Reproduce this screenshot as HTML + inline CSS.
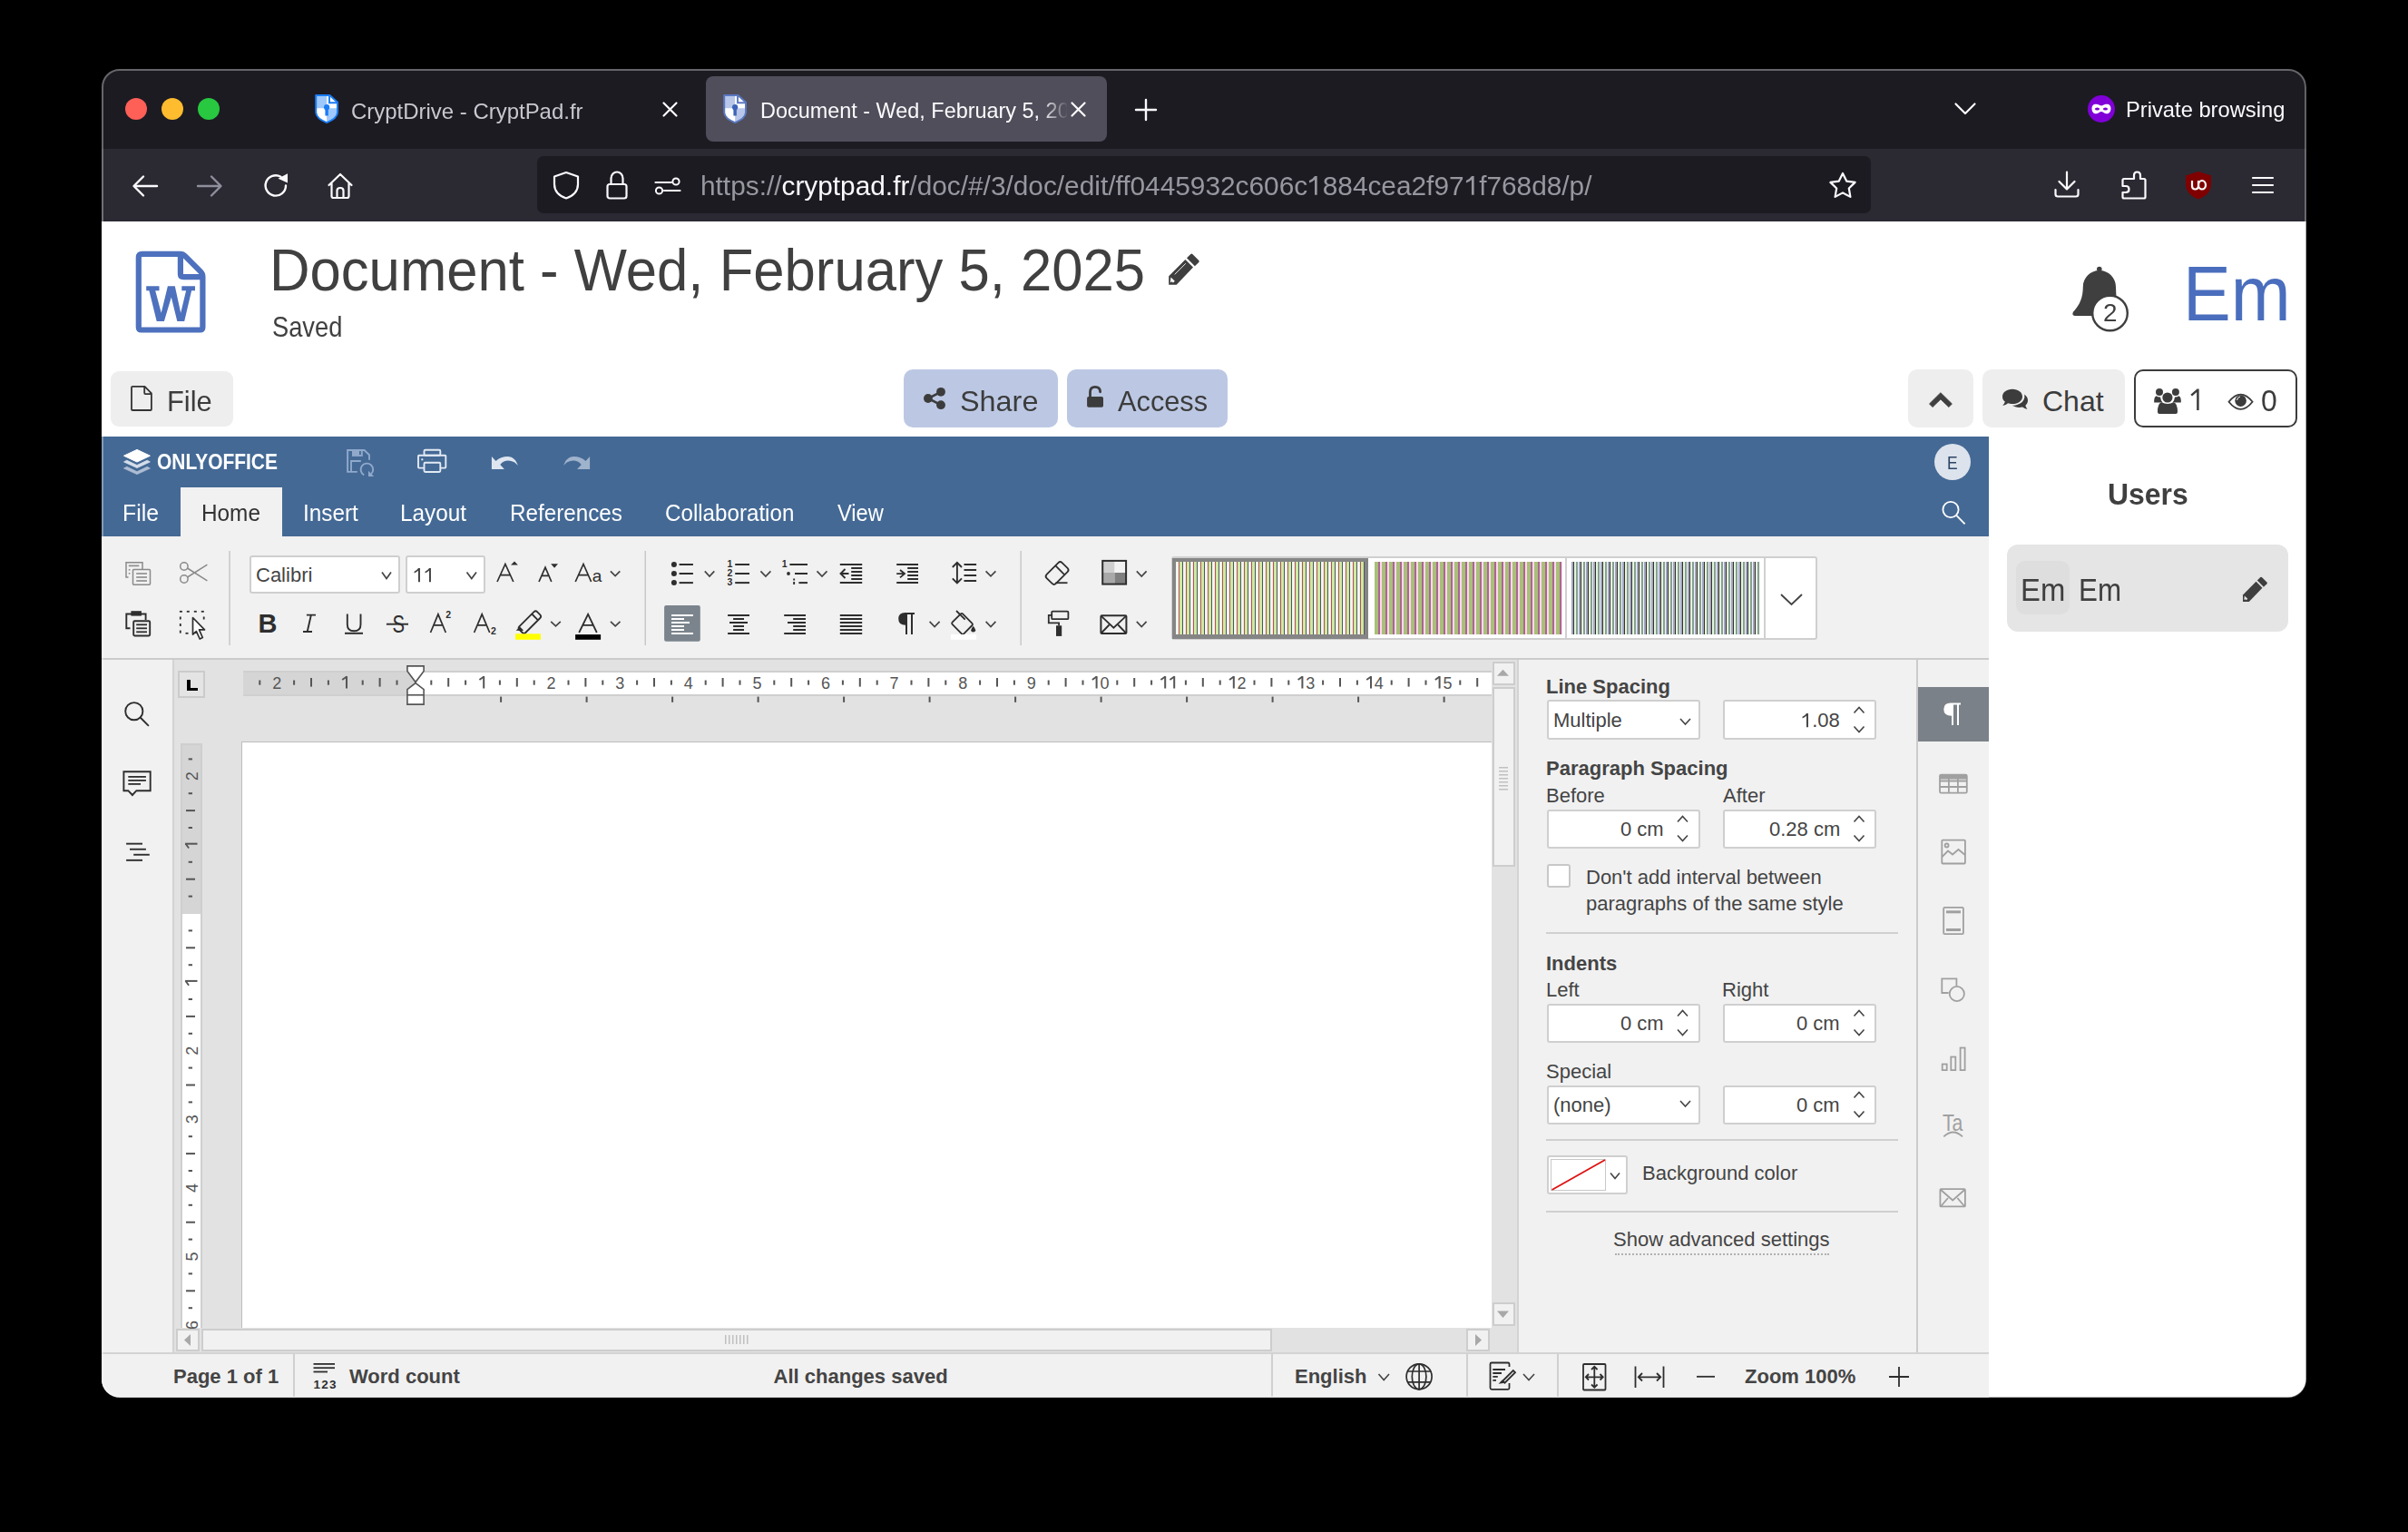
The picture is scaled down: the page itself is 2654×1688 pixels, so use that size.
<!DOCTYPE html>
<html><head><meta charset="utf-8"><style>*{box-sizing:border-box;margin:0;padding:0}
html,body{width:2654px;height:1688px;overflow:hidden;background:#000;font-family:"Liberation Sans",sans-serif}
.a{position:absolute}
#win{position:absolute;left:0;top:0;width:2654px;height:1688px;clip-path:inset(76px 112.5px 148.5px 112px round 20px)}
#wb{position:absolute;left:112px;top:76px;width:2430px;height:1464px;border-radius:20px;border:2px solid rgba(255,255,255,0.33)}
.t{position:absolute;white-space:nowrap;line-height:1}
svg{position:absolute;overflow:visible}
</style></head><body>
<div id="win">
<div class="a" style="left:112px;top:76px;width:2430px;height:88px;background:#1c1b22;"></div>
<div class="a" style="left:138px;top:108px;width:24px;height:24px;background:#fe5f57;border-radius:50%"></div>
<div class="a" style="left:178px;top:108px;width:24px;height:24px;background:#febc2e;border-radius:50%"></div>
<div class="a" style="left:218px;top:108px;width:24px;height:24px;background:#28c840;border-radius:50%"></div>
<div class="a" style="left:112px;top:164px;width:2430px;height:80px;background:#2b2a33;"></div>
<div class="a" style="left:592px;top:172px;width:1470px;height:63px;background:#1c1b22;border-radius:7px"></div>
<div class="a" style="left:112px;top:244px;width:2430px;height:1296px;background:#fff;"></div>
<svg style="left:347px;top:104px" width="26" height="32" viewBox="0 0 26 32"><path d="M1.2 1 H16.4 L25 8.8 V20 Q24.5 26.5 13.1 31.1 Q1.7 26.5 1.2 20 Z" fill="#fff"/><path d="M1.2 1 H13.1 V15.3 H1.2 Z" fill="#9ec8fb"/><path d="M13.1 15.3 H25 V20 Q24.5 26.5 13.1 31.1 Z" fill="#9ec8fb"/><path d="M1.2 1 H16.4 L25 8.8 V20 Q24.5 26.5 13.1 31.1 Q1.7 26.5 1.2 20 Z" fill="none" stroke="#1a7cf5" stroke-width="2" stroke-linejoin="round"/><path d="M16 1.5 V9.2 H24.5" fill="none" stroke="#1a7cf5" stroke-width="1.9"/><circle cx="13.1" cy="14.2" r="3.1" fill="#1a7cf5"/><rect x="11.4" y="14.5" width="3.4" height="9" fill="#1a7cf5"/></svg>
<div class="t" style="left:387.00px;top:110.72px;font-size:24px;color:#c8c8d0;font-weight:400;transform:scaleX(0.9980);transform-origin:0 0;">CryptDrive - CryptPad.fr</div>
<svg style="left:730px;top:112px" width="17" height="17" viewBox="0 0 17 17"><path d="M1.5 1.5 L15.5 15.5 M15.5 1.5 L1.5 15.5" stroke="#fbfbfe" stroke-width="2.2" stroke-linecap="round"/></svg>
<div class="a" style="left:778px;top:84px;width:442px;height:72px;background:#4f4e5a;border-radius:8px"></div>
<svg style="left:797px;top:104px" width="26" height="32" viewBox="0 0 26 32"><path d="M1.2 1 H16.4 L25 8.8 V20 Q24.5 26.5 13.1 31.1 Q1.7 26.5 1.2 20 Z" fill="#fff"/><path d="M1.2 1 H13.1 V15.3 H1.2 Z" fill="#b8c6ea"/><path d="M13.1 15.3 H25 V20 Q24.5 26.5 13.1 31.1 Z" fill="#b8c6ea"/><path d="M1.2 1 H16.4 L25 8.8 V20 Q24.5 26.5 13.1 31.1 Q1.7 26.5 1.2 20 Z" fill="none" stroke="#5b78c2" stroke-width="2" stroke-linejoin="round"/><path d="M16 1.5 V9.2 H24.5" fill="none" stroke="#5b78c2" stroke-width="1.9"/><circle cx="13.1" cy="14.2" r="3.1" fill="#3d62b8"/><rect x="11.4" y="14.5" width="3.4" height="9" fill="#3d62b8"/></svg>
<div class="a" style="left:830px;top:90px;width:346px;height:60px;overflow:hidden;-webkit-mask-image:linear-gradient(to right,#000 318px,rgba(0,0,0,0.05) 346px)"><div class="t" style="left:8px;top:19.5px;font-size:24px;color:#fbfbfe;transform:scaleX(0.976);transform-origin:0 0">Document - Wed, February 5, 2025</div></div>
<svg style="left:1180px;top:112px" width="17" height="17" viewBox="0 0 17 17"><path d="M1.5 1.5 L15.5 15.5 M15.5 1.5 L1.5 15.5" stroke="#fbfbfe" stroke-width="2.2" stroke-linecap="round"/></svg>
<svg style="left:1251px;top:109px" width="24" height="24" viewBox="0 0 24 24"><path d="M12 1 V23 M1 12 H23" stroke="#fbfbfe" stroke-width="2.4" stroke-linecap="round"/></svg>
<svg style="left:2154px;top:113px" width="24" height="14" viewBox="0 0 24 14"><path d="M1.5 1.5 L12 12 L22.5 1.5" stroke="#fbfbfe" stroke-width="2.2" fill="none" stroke-linecap="round" stroke-linejoin="round"/></svg>
<svg style="left:2301px;top:105px" width="30" height="30" viewBox="0 0 30 30"><circle cx="15" cy="15" r="15" fill="#8000d7"/><path d="M4.5 14.5 C4.5 10 8 9 11 10 C13 10.6 14 11.5 15 11.5 C16 11.5 17 10.6 19 10 C22 9 25.5 10 25.5 14.5 C25.5 19 22.5 21 19.5 20 C17.5 19.4 16.5 18 15 18 C13.5 18 12.5 19.4 10.5 20 C7.5 21 4.5 19 4.5 14.5 Z" fill="#fff"/><ellipse cx="10.5" cy="15" rx="2.6" ry="1.6" fill="#8000d7"/><ellipse cx="19.5" cy="15" rx="2.6" ry="1.6" fill="#8000d7"/></svg>
<div class="t" style="left:2343.02px;top:108.72px;font-size:24px;color:#fbfbfe;font-weight:400;transform:scaleX(0.9885);transform-origin:0 0;">Private browsing</div>
<svg style="left:146px;top:193px" width="28" height="24" viewBox="0 0 28 24"><path d="M27 12 H2 M12 1.5 L1.5 12 L12 22.5" stroke="#fbfbfe" stroke-width="2.4" fill="none" stroke-linecap="round" stroke-linejoin="round"/></svg>
<svg style="left:217px;top:193px" width="28" height="24" viewBox="0 0 28 24"><path d="M1 12 H26 M16 1.5 L26.5 12 L16 22.5" stroke="#8f8f9d" stroke-width="2.4" fill="none" stroke-linecap="round" stroke-linejoin="round"/></svg>
<svg style="left:290px;top:190px" width="28" height="28" viewBox="0 0 28 28"><path d="M25 14.5 A 11.2 11.2 0 1 1 19.5 4.8" stroke="#fbfbfe" stroke-width="2.4" fill="none" stroke-linecap="round"/><path d="M16.5 6.8 L27 1.2 L27 11.5 Z" fill="#fbfbfe"/></svg>
<svg style="left:360px;top:190px" width="30" height="30" viewBox="0 0 30 30"><path d="M2.5 14 L15 2 L27.5 14 M5.5 11.5 V26 C5.5 27 6 28 7.5 28 H22.5 C24 28 24.5 27 24.5 26 V11.5 M11.5 28 V20 C11.5 18 13 17 15 17 C17 17 18.5 18 18.5 20 V28" stroke="#fbfbfe" stroke-width="2.2" fill="none" stroke-linecap="round" stroke-linejoin="round"/></svg>
<svg style="left:609px;top:188px" width="30" height="32" viewBox="0 0 30 32"><path d="M15 2 L28 6.5 V15 C28 23 22 28 15 30.5 C8 28 2 23 2 15 V6.5 Z" stroke="#fbfbfe" stroke-width="2.2" fill="none" stroke-linejoin="round"/></svg>
<svg style="left:668px;top:188px" width="24" height="32" viewBox="0 0 24 32"><rect x="1.5" y="15" width="21" height="15.5" rx="2.5" stroke="#fbfbfe" stroke-width="2.2" fill="none"/><path d="M5.5 15 V8.5 C5.5 4.5 8.5 1.5 12 1.5 C15.5 1.5 18.5 4.5 18.5 8.5 V15" stroke="#fbfbfe" stroke-width="2.2" fill="none"/></svg>
<svg style="left:721px;top:195px" width="30" height="20" viewBox="0 0 30 20"><path d="M1.5 6 H19 M11 15 H28.5" stroke="#fbfbfe" stroke-width="2.2" stroke-linecap="round"/><circle cx="24" cy="5" r="3.6" stroke="#fbfbfe" stroke-width="2" fill="#1c1b22"/><circle cx="5.5" cy="15" r="3.6" stroke="#fbfbfe" stroke-width="2" fill="#1c1b22"/></svg>
<div class="t" style="left:772.01px;top:189.65px;font-size:30px;color:#9797a0;font-weight:400;transform:scaleX(0.9939);transform-origin:0 0;">https://<span style="color:#fbfbfe">cryptpad.fr</span>/doc/#/3/doc/edit/ff0445932c606c<svg viewBox="0 0 556 690" style="position:static;display:inline-block;width:0.556em;height:0.69em;overflow:visible"><path d="M275 0 H362 V690 H272 V130 Q190 210 70 250 V165 Q205 110 275 0 Z" fill="currentColor"/></svg>884cea2f97<svg viewBox="0 0 556 690" style="position:static;display:inline-block;width:0.556em;height:0.69em;overflow:visible"><path d="M275 0 H362 V690 H272 V130 Q190 210 70 250 V165 Q205 110 275 0 Z" fill="currentColor"/></svg>f768d8/p/</div>
<svg style="left:2015px;top:189px" width="32" height="31" viewBox="0 0 32 31"><path d="M16 2 L20.2 10.6 L29.6 11.9 L22.8 18.5 L24.4 27.9 L16 23.4 L7.6 27.9 L9.2 18.5 L2.4 11.9 L11.8 10.6 Z" stroke="#fbfbfe" stroke-width="2.2" fill="none" stroke-linejoin="round"/></svg>
<svg style="left:2264px;top:188px" width="28" height="30" viewBox="0 0 28 30"><path d="M14 1.5 V20 M5.5 12 L14 20.5 L22.5 12 M1.5 21 V26 C1.5 27.5 2.5 28.5 4 28.5 H24 C25.5 28.5 26.5 27.5 26.5 26 V21" stroke="#fbfbfe" stroke-width="2.2" fill="none" stroke-linecap="round" stroke-linejoin="round"/></svg>
<svg style="left:2338px;top:188px" width="28" height="32" viewBox="0 0 28 32"><path d="M9 9 H14 V5.5 C14 3 15.5 1.5 17.5 1.5 C19.5 1.5 21 3 21 5.5 V9 H25 C25.8 9 26.5 9.7 26.5 10.5 V29 C26.5 29.8 25.8 30.5 25 30.5 H3 C2.2 30.5 1.5 29.8 1.5 29 V24 H5 C7 24 8.5 22.5 8.5 20.5 C8.5 18.5 7 17 5 17 H1.5 V10.5 C1.5 9.7 2.2 9 3 9 Z" stroke="#fbfbfe" stroke-width="2.2" fill="none" stroke-linejoin="round"/></svg>
<svg style="left:2408px;top:188px" width="30" height="32" viewBox="0 0 30 32"><path d="M15 1 L29 5.5 V15 C29 23 23 28.5 15 31.5 C7 28.5 1 23 1 15 V5.5 Z" fill="#800000"/><path d="M8 11 V16.5 C8 19 9.5 20.5 11.5 20.5 C13.5 20.5 15 19 15 16.5 V11" stroke="#fff" stroke-width="2.2" fill="none"/><path d="M15 16 C15 13 17 11 19 11 C21 11 23 13 23 16 C23 18.8 21 20.5 19 20.5 C17 20.5 15 18.8 15 16 Z" stroke="#fff" stroke-width="2.2" fill="none"/></svg>
<svg style="left:2482px;top:194px" width="24" height="20" viewBox="0 0 24 20"><path d="M1 2 H23 M1 10 H23 M1 18 H23" stroke="#fbfbfe" stroke-width="2.2" stroke-linecap="round"/></svg>
<div class="t" style="left:296.78px;top:265.92px;font-size:64px;color:#404040;font-weight:400;transform:scaleX(0.9632);transform-origin:0 0;">Document - Wed, February 5, 2025</div>
<div class="t" style="left:300.15px;top:343.96px;font-size:32px;color:#404040;font-weight:400;transform:scaleX(0.8523);transform-origin:0 0;">Saved</div>
<div class="a" style="left:122px;top:409px;width:135px;height:61px;background:#eeeeee;border-radius:9px"></div>
<div class="t" style="left:184.37px;top:425.96px;font-size:32px;color:#3c3c3c;font-weight:400;transform:scaleX(0.9653);transform-origin:0 0;">File</div>
<div class="a" style="left:996px;top:407px;width:170px;height:64px;background:#bcc8e3;border-radius:10px"></div>
<div class="t" style="left:1057.99px;top:425.96px;font-size:32px;color:#3c3c3c;font-weight:400;transform:scaleX(1.0120);transform-origin:0 0;">Share</div>
<div class="a" style="left:1176px;top:407px;width:177px;height:64px;background:#bcc8e3;border-radius:10px"></div>
<div class="t" style="left:1232.00px;top:425.96px;font-size:32px;color:#3c3c3c;font-weight:400;transform:scaleX(0.9608);transform-origin:0 0;">Access</div>
<div class="t" style="left:2406.49px;top:281.18px;font-size:85px;color:#4a6ebd;font-weight:400;transform:scaleX(0.9304);transform-origin:0 0;">Em</div>
<div class="a" style="left:2103px;top:407px;width:72px;height:64px;background:#eeeeee;border-radius:10px"></div>
<div class="a" style="left:2185px;top:407px;width:157px;height:64px;background:#eeeeee;border-radius:10px"></div>
<div class="t" style="left:2251.00px;top:425.96px;font-size:32px;color:#3c3c3c;font-weight:400;transform:scaleX(1.0000);transform-origin:0 0;">Chat</div>
<div class="a" style="left:2352px;top:407px;width:180px;height:64px;border:2px solid #3c3c3c;border-radius:10px"></div>
<svg style="left:0;top:0" width="2654" height="1688" viewBox="0 0 2654 1688"><path d="M2422.4 428.6 V452 M2415.2 435.6 L2422.4 429.4" stroke="#3c3c3c" stroke-width="2.5" fill="none"/></svg>
<div class="t" style="left:2492.03px;top:425.12px;font-size:33px;color:#3c3c3c;font-weight:400;transform:scaleX(0.9688);transform-origin:0 0;">0</div>
<svg style="left:0;top:0" width="2654" height="1688" viewBox="0 0 2654 1688"><g transform="translate(149.7,276.8)" fill="none" stroke="#4e71be" stroke-width="6.2" stroke-linejoin="round"><path d="M3.1 7 Q3.1 3.1 7 3.1 H49 Q52 3.1 54.5 5.6 L71.5 22.6 Q73.7 24.8 73.7 28 V83.8 Q73.7 86.7 70.8 86.7 H6 Q3.1 86.7 3.1 83.8 Z"/><path d="M49.2 3.1 V25 Q49.2 28.4 52.6 28.4 H73.7"/></g><path fill="#4e71be" d="M161.2 315.3 H175.5 V320.3 H171.2 L177.7 344.7 L184.9 315.3 H192.8 L199.2 344.7 L205.1 320.3 H200.3 V315.3 H215 V320.3 H211.1 L203.2 354 H195.3 L188.8 327.5 L180.9 354 H172.7 L164.4 320.3 H161.2 Z"/><g fill="#3f3f3f"><path d="M1288.2 313.7 V304.3 L1306.4 286 L1315 294.6 L1296.7 313.7 Z"/><path d="M1308 284.3 L1312.3 280 Q1313.3 279.2 1314.3 280 L1321.3 287 Q1322.1 288 1321.3 289 L1316.9 293.3 Z"/></g><path d="M1294.7 302.4 L1306.8 290.3" stroke="#fff" stroke-width="0.9"/><path d="M1290.5 305.5 L1294.8 309.8 L1292.9 311.5 L1291.4 310.2 L1289.8 311.4 Z" fill="#fff"/><path d="M145 427 Q145 425.9 146.1 425.9 H159.5 L166.9 433.3 V451 Q166.9 452 165.9 452 H146.1 Q145 452 145 451 Z M159.2 425.9 V433 Q159.2 434.1 160.3 434.1 H166.9" fill="none" stroke="#333" stroke-width="1.8" stroke-linejoin="round"/><g fill="#3c3c3c"><circle cx="1037" cy="431.8" r="4.9"/><circle cx="1022.9" cy="439" r="4.9"/><circle cx="1037" cy="446.2" r="4.9"/></g><path d="M1037 431.8 L1022.9 439 L1037 446.2" stroke="#3c3c3c" stroke-width="2.6" fill="none"/><rect x="1198.1" y="437" width="17.9" height="11.8" rx="1.8" fill="#3c3c3c"/><path d="M1201.5 437.5 V432 Q1201.5 426.3 1207 426.3 Q1212.6 426.3 1212.6 431.8" stroke="#3c3c3c" stroke-width="2.8" fill="none" stroke-linecap="round"/><circle cx="2313.8" cy="296.6" r="2.8" fill="#3f3f3f"/><path d="M2295.8 316 C2295.8 306 2303.9 298 2313.9 298 C2323.9 298 2332 306 2332 316 L2333.3 348 H2287 C2284 348 2283.5 345 2286 342.5 C2292 336 2295.8 328 2295.8 316 Z" fill="#3f3f3f"/><circle cx="2325.5" cy="345" r="19.3" fill="#fff" stroke="#3f3f3f" stroke-width="2.4"/><path d="M2126.5 444.9 L2138.9 432.7 L2151.4 444.9 L2147.9 448.6 L2138.9 439.9 L2130 448.6 Z" fill="#3f3f3f" stroke="#3f3f3f" stroke-width="0.8" stroke-linejoin="round"/><path d="M2218 428.8 C2224.5 428.8 2229 432.5 2229 436.9 C2229 441.4 2224.5 445 2218 445 C2216 445 2214.5 444.7 2213 444.3 C2211.5 445.5 2209.5 446.7 2207.2 446.9 C2208.5 445.6 2209.5 444 2209.8 442.6 C2208 441.2 2207 439.2 2207 436.9 C2207 432.5 2211.5 428.8 2218 428.8 Z" fill="#3c3c3c"/><path d="M2231.2 434.6 C2233.6 436.3 2235 438.8 2235 441.3 C2235 443.5 2234 445.3 2232.4 446.8 C2232.6 448.2 2233.5 449.7 2234.5 450.7 C2232.6 450.5 2230.6 449.6 2229.2 448.4 C2228 448.7 2226.8 448.9 2225.5 448.9 C2222.6 448.9 2219.8 448 2217.8 446.8 C2225.5 446.6 2231.4 442.3 2231.4 436.9 Z" fill="#3c3c3c"/><g fill="#3c3c3c"><circle cx="2380" cy="432" r="4"/><circle cx="2397.9" cy="432" r="4"/><path d="M2374.2 443.6 Q2373.8 437.5 2376.5 436.2 Q2378.5 437.6 2381 437.5 Q2381.5 441.5 2383.5 443.6 Z"/><path d="M2403.8 443.6 Q2404.2 437.5 2401.5 436.2 Q2399.5 437.6 2397 437.5 Q2396.5 441.5 2394.5 443.6 Z"/><circle cx="2388.9" cy="438" r="5.6"/><path d="M2378 454 Q2378 444 2382.5 443.3 Q2385.5 445 2389 445 Q2392.5 445 2395.5 443.3 Q2400 444 2400 454 Q2400 456 2398 456 H2380 Q2378 456 2378 454 Z"/></g><path d="M2380 432 m0 0" /><path d="M2456.5 442.8 Q2469.6 426.5 2482.6 442.8 Q2469.6 459 2456.5 442.8 Z" fill="none" stroke="#3c3c3c" stroke-width="1.8"/><circle cx="2469.6" cy="441.6" r="6.3" fill="#3c3c3c"/><path d="M2465.5 441 Q2466 437.5 2469 437" stroke="#fff" stroke-width="1" fill="none"/></svg>
<div class="t" style="left:2317.97px;top:332.19px;font-size:27px;color:#3f3f3f;font-weight:400;transform:scaleX(1.0308);transform-origin:0 0;">2</div>
<div class="a" style="left:112px;top:481px;width:2080px;height:110px;background:#446995;"></div>
<div class="a" style="left:199px;top:537px;width:112px;height:54px;background:#f1f1f1;"></div>
<div class="a" style="left:112px;top:591px;width:2080px;height:136px;background:#f1f1f1;border-bottom:2px solid #cbcbcb"></div>
<div class="a" style="left:112px;top:727px;width:80px;height:763px;background:#f1f1f1;border-right:2px solid #d3d3d3"></div>
<div class="a" style="left:192px;top:727px;width:1480px;height:763px;background:#e2e2e2;"></div>
<div class="a" style="left:266px;top:817px;width:1378px;height:646px;background:#fff;border-left:1px solid #bdbdbd;border-top:1px solid #bdbdbd"></div>
<div class="a" style="left:1672px;top:727px;width:520px;height:763px;background:#f1f1f1;border-left:2px solid #d3d3d3"></div>
<div class="a" style="left:2112px;top:727px;width:80px;height:763px;background:#f1f1f1;border-left:2px solid #cbcbcb"></div>
<div class="a" style="left:112px;top:1490px;width:2080px;height:50px;background:#f1f1f1;border-top:2px solid #d3d3d3"></div>
<div class="t" style="left:173.19px;top:498.06px;font-size:23px;color:#fff;font-weight:700;transform:scaleX(0.9097);transform-origin:0 0;">ONLYOFFICE</div>
<div class="t" style="left:134.62px;top:552.88px;font-size:25px;color:#fff;font-weight:400;transform:scaleX(0.9921);transform-origin:0 0;">File</div>
<div class="t" style="left:221.65px;top:552.88px;font-size:25px;color:#333;font-weight:400;transform:scaleX(0.9734);transform-origin:0 0;">Home</div>
<div class="t" style="left:333.56px;top:552.88px;font-size:25px;color:#fff;font-weight:400;transform:scaleX(0.9721);transform-origin:0 0;">Insert</div>
<div class="t" style="left:441.45px;top:552.88px;font-size:25px;color:#fff;font-weight:400;transform:scaleX(0.9740);transform-origin:0 0;">Layout</div>
<div class="t" style="left:561.56px;top:552.88px;font-size:25px;color:#fff;font-weight:400;transform:scaleX(0.9688);transform-origin:0 0;">References</div>
<div class="t" style="left:732.63px;top:552.88px;font-size:25px;color:#fff;font-weight:400;transform:scaleX(0.9662);transform-origin:0 0;">Collaboration</div>
<div class="t" style="left:923.00px;top:552.88px;font-size:25px;color:#fff;font-weight:400;transform:scaleX(0.9463);transform-origin:0 0;">View</div>
<div class="a" style="left:2132px;top:489px;width:40px;height:40px;background:#dde3ec;border-radius:50%"></div>
<div class="t" style="left:2146.07px;top:498.75px;font-size:21px;color:#2b4566;font-weight:400;transform:scaleX(0.8308);transform-origin:0 0;">E</div>
<div class="a" style="left:275px;top:612px;width:166px;height:42px;background:#fff;border:2px solid #cfcfcf;border-radius:3px"></div>
<div class="a" style="left:447px;top:612px;width:88px;height:42px;background:#fff;border:2px solid #cfcfcf;border-radius:3px"></div>
<div class="t" style="left:282.00px;top:623.41px;font-size:22px;color:#444;font-weight:400;">Calibri</div>
<div class="t" style="left:455.00px;top:623.41px;font-size:22px;color:#444;font-weight:400;"><svg viewBox="0 0 556 690" style="position:static;display:inline-block;width:0.556em;height:0.69em;overflow:visible"><path d="M275 0 H362 V690 H272 V130 Q190 210 70 250 V165 Q205 110 275 0 Z" fill="currentColor"/></svg><svg viewBox="0 0 556 690" style="position:static;display:inline-block;width:0.556em;height:0.69em;overflow:visible"><path d="M275 0 H362 V690 H272 V130 Q190 210 70 250 V165 Q205 110 275 0 Z" fill="currentColor"/></svg></div>
<div class="a" style="left:1291px;top:613px;width:712px;height:92px;background:#fff;border:2px solid #cfcfcf;border-radius:3px"></div>
<div class="a" style="left:1292px;top:614.5px;width:216px;height:89px;background:#858585;"></div>
<div class="a" style="left:1296px;top:619px;width:208px;height:80px;background:repeating-linear-gradient(90deg,#eef7ee 0px,#eef7ee 1.66px,#ffe4ee 1.66px,#ffe4ee 3.3px,#a85a50 3.3px,#a85a50 4.15px,#cfe8a2 4.15px,#cfe8a2 7px,#4c5a5a 7px,#4c5a5a 8px)"></div>
<div class="a" style="left:1515px;top:619px;width:207px;height:80px;background:repeating-linear-gradient(90deg,#a8c078 0px,#a8c078 3.6px,#a86890 3.6px,#a86890 6.1px,#ffd6ef 6.1px,#ffd6ef 8px)"></div>
<div class="a" style="left:1725px;top:614px;width:2px;height:90px;background:#d0d0d0;"></div>
<div class="a" style="left:1732px;top:619px;width:208px;height:80px;background:repeating-linear-gradient(90deg,#a0a6c4 0px,#a0a6c4 2px,#3c3020 2px,#3c3020 3.4px,#e2f6e0 3.4px,#e2f6e0 5px,#88a090 5px,#88a090 7px,#f4f6f8 7px,#f4f6f8 8px)"></div>
<div class="a" style="left:1944px;top:614px;width:2px;height:90px;background:#d0d0d0;"></div>
<div class="a" style="left:196px;top:739px;width:30px;height:30px;background:#e4e4e4;border:2px solid #cbcbcb"></div>
<div class="a" style="left:206px;top:749px;width:3.5px;height:12px;background:#000;"></div>
<div class="a" style="left:206px;top:757.5px;width:12px;height:3.5px;background:#000;"></div>
<div class="a" style="left:268px;top:739px;width:1376px;height:28px;background:#cfcfcf;"></div>
<div class="a" style="left:268px;top:741px;width:1376px;height:24px;background:#fff;"></div>
<div class="a" style="left:268px;top:741px;width:189px;height:24px;background:#d5d5d5;"></div>
<div class="a" style="left:199px;top:819px;width:24px;height:644px;background:#cfcfcf;"></div>
<div class="a" style="left:201px;top:821px;width:20px;height:642px;background:#fff;"></div>
<div class="a" style="left:201px;top:821px;width:20px;height:186px;background:#d5d5d5;"></div>
<div class="a" style="left:1644px;top:727px;width:28px;height:736px;background:#e2e2e2;"></div>
<div class="a" style="left:1644.5px;top:729px;width:25.5px;height:26px;background:#f1f1f1;border:2px solid #cdcdcd"></div>
<div class="a" style="left:1644.5px;top:757px;width:25.5px;height:198px;background:#f1f1f1;border:2px solid #cdcdcd"></div>
<div class="a" style="left:1644.5px;top:1435px;width:25.5px;height:26px;background:#f1f1f1;border:2px solid #cdcdcd"></div>
<div class="a" style="left:192px;top:1463px;width:1452px;height:27px;background:#e2e2e2;"></div>
<div class="a" style="left:194px;top:1463.5px;width:26px;height:25px;background:#f1f1f1;border:2px solid #cdcdcd"></div>
<div class="a" style="left:222px;top:1463.5px;width:1180px;height:25px;background:#f1f1f1;border:2px solid #cdcdcd"></div>
<div class="a" style="left:1616px;top:1463.5px;width:25.5px;height:25px;background:#f1f1f1;border:2px solid #cdcdcd"></div>
<div class="t" style="left:2322.77px;top:528.12px;font-size:33px;color:#3f3f3f;font-weight:700;transform:scaleX(0.9674);transform-origin:0 0;">Users</div>
<div class="a" style="left:2212px;top:600px;width:310px;height:96px;background:#e5e5e5;border-radius:12px"></div>
<div class="a" style="left:2222px;top:618px;width:59px;height:59px;background:#dedede;border-radius:10px"></div>
<div class="t" style="left:2227.19px;top:632.42px;font-size:35px;color:#3f3f3f;font-weight:400;transform:scaleX(0.9375);transform-origin:0 0;">Em</div>
<div class="t" style="left:2291.31px;top:632.42px;font-size:35px;color:#3f3f3f;font-weight:400;transform:scaleX(0.8958);transform-origin:0 0;">Em</div>
<div class="t" style="left:1704.00px;top:746.41px;font-size:22px;color:#444;font-weight:700;">Line Spacing</div>
<div class="a" style="left:1704.5px;top:771.0px;width:169px;height:43.5px;background:#fff;border:2px solid #cfcfcf;border-radius:3px"></div>
<div class="a" style="left:1898.5px;top:771.0px;width:169px;height:43.5px;background:#fff;border:2px solid #cfcfcf;border-radius:3px"></div>
<div class="t" style="left:1712.00px;top:783.41px;font-size:22px;color:#444;font-weight:400;">Multiple</div>
<div class="t" style="left:1985.00px;top:783.41px;font-size:22px;color:#444;font-weight:400;"><svg viewBox="0 0 556 690" style="position:static;display:inline-block;width:0.556em;height:0.69em;overflow:visible"><path d="M275 0 H362 V690 H272 V130 Q190 210 70 250 V165 Q205 110 275 0 Z" fill="currentColor"/></svg>.08</div>
<div class="t" style="left:1704.00px;top:836.41px;font-size:22px;color:#444;font-weight:700;">Paragraph Spacing</div>
<div class="t" style="left:1704.00px;top:866.41px;font-size:22px;color:#444;font-weight:400;">Before</div>
<div class="t" style="left:1899.00px;top:866.41px;font-size:22px;color:#444;font-weight:400;">After</div>
<div class="a" style="left:1704.5px;top:891.5px;width:169px;height:43.5px;background:#fff;border:2px solid #cfcfcf;border-radius:3px"></div>
<div class="a" style="left:1898.5px;top:891.5px;width:169px;height:43.5px;background:#fff;border:2px solid #cfcfcf;border-radius:3px"></div>
<div class="t" style="left:1786.00px;top:903.41px;font-size:22px;color:#444;font-weight:400;">0 cm</div>
<div class="t" style="left:1950.00px;top:903.41px;font-size:22px;color:#444;font-weight:400;">0.28 cm</div>
<div class="a" style="left:1705px;top:952px;width:26px;height:26px;background:#fff;border:2px solid #c8c8c8;border-radius:3px"></div>
<div class="t" style="left:1748.00px;top:956.41px;font-size:22px;color:#444;font-weight:400;">Don't add interval between</div>
<div class="t" style="left:1748.00px;top:985.41px;font-size:22px;color:#444;font-weight:400;">paragraphs of the same style</div>
<div class="a" style="left:1704px;top:1027px;width:388px;height:2px;background:#d0d0d0;"></div>
<div class="t" style="left:1704.00px;top:1050.91px;font-size:22px;color:#444;font-weight:700;">Indents</div>
<div class="t" style="left:1704.00px;top:1080.41px;font-size:22px;color:#444;font-weight:400;">Left</div>
<div class="t" style="left:1898.00px;top:1080.41px;font-size:22px;color:#444;font-weight:400;">Right</div>
<div class="a" style="left:1704.5px;top:1105.5px;width:169px;height:43.5px;background:#fff;border:2px solid #cfcfcf;border-radius:3px"></div>
<div class="a" style="left:1898.5px;top:1105.5px;width:169px;height:43.5px;background:#fff;border:2px solid #cfcfcf;border-radius:3px"></div>
<div class="t" style="left:1786.00px;top:1117.41px;font-size:22px;color:#444;font-weight:400;">0 cm</div>
<div class="t" style="left:1980.00px;top:1117.41px;font-size:22px;color:#444;font-weight:400;">0 cm</div>
<div class="t" style="left:1704.00px;top:1170.41px;font-size:22px;color:#444;font-weight:400;">Special</div>
<div class="a" style="left:1704.5px;top:1195.5px;width:169px;height:43.5px;background:#fff;border:2px solid #cfcfcf;border-radius:3px"></div>
<div class="a" style="left:1898.5px;top:1195.5px;width:169px;height:43.5px;background:#fff;border:2px solid #cfcfcf;border-radius:3px"></div>
<div class="t" style="left:1712.00px;top:1207.41px;font-size:22px;color:#444;font-weight:400;">(none)</div>
<div class="t" style="left:1980.00px;top:1207.41px;font-size:22px;color:#444;font-weight:400;">0 cm</div>
<div class="a" style="left:1704px;top:1255px;width:388px;height:2px;background:#d0d0d0;"></div>
<div class="a" style="left:1704.5px;top:1272.5px;width:89px;height:43.5px;background:#fff;border:2px solid #cfcfcf;border-radius:3px"></div>
<div class="a" style="left:1709px;top:1277px;width:61px;height:35px;background:#fff;border:1.5px solid #c8c8c8"></div>
<div class="t" style="left:1810.00px;top:1282.41px;font-size:22px;color:#444;font-weight:400;">Background color</div>
<div class="a" style="left:1704px;top:1333.5px;width:388px;height:2px;background:#d0d0d0;"></div>
<div class="t" style="left:1778.00px;top:1355.41px;font-size:22px;color:#444;font-weight:400;">Show advanced settings</div>
<div class="a" style="left:1780px;top:1381px;width:236px;height:0;border-top:2px dotted #b0b0b0"></div>
<div class="a" style="left:2114px;top:757px;width:78px;height:60px;background:#7b8188;"></div>
<div class="t" style="left:191.00px;top:1506.41px;font-size:22px;color:#444;font-weight:700;">Page 1 of 1</div>
<div class="a" style="left:323px;top:1492px;width:2px;height:48px;background:#d0d0d0;"></div>
<div class="t" style="left:385.00px;top:1506.41px;font-size:22px;color:#444;font-weight:700;">Word count</div>
<div class="t" style="left:852.60px;top:1506.41px;font-size:22px;color:#444;font-weight:700;">All changes saved</div>
<div class="a" style="left:1401px;top:1492px;width:2px;height:48px;background:#d0d0d0;"></div>
<div class="t" style="left:1427.00px;top:1506.41px;font-size:22px;color:#444;font-weight:700;">English</div>
<div class="a" style="left:1616px;top:1492px;width:2px;height:48px;background:#d0d0d0;"></div>
<div class="a" style="left:1716px;top:1492px;width:2px;height:48px;background:#d0d0d0;"></div>
<div class="t" style="left:1923.00px;top:1506.41px;font-size:22px;color:#444;font-weight:700;">Zoom 100%</div>
<svg style="left:0;top:0" width="2654" height="1688" viewBox="0 0 2654 1688"><g fill="#555"><rect x="285.3" y="749.5" width="2" height="5.2"/><rect x="323.1" y="749.5" width="2" height="5.2"/><rect x="342.0" y="747" width="2" height="9.6"/><rect x="360.9" y="749.5" width="2" height="5.2"/><rect x="398.7" y="749.5" width="2" height="5.2"/><rect x="417.6" y="747" width="2" height="9.6"/><rect x="436.5" y="749.5" width="2" height="5.2"/><rect x="474.3" y="749.5" width="2" height="5.2"/><rect x="493.2" y="747" width="2" height="9.6"/><rect x="512.1" y="749.5" width="2" height="5.2"/><rect x="549.9" y="749.5" width="2" height="5.2"/><rect x="568.8" y="747" width="2" height="9.6"/><rect x="587.7" y="749.5" width="2" height="5.2"/><rect x="625.5" y="749.5" width="2" height="5.2"/><rect x="644.4" y="747" width="2" height="9.6"/><rect x="663.3" y="749.5" width="2" height="5.2"/><rect x="701.1" y="749.5" width="2" height="5.2"/><rect x="720.0" y="747" width="2" height="9.6"/><rect x="738.9" y="749.5" width="2" height="5.2"/><rect x="776.7" y="749.5" width="2" height="5.2"/><rect x="795.6" y="747" width="2" height="9.6"/><rect x="814.5" y="749.5" width="2" height="5.2"/><rect x="852.3" y="749.5" width="2" height="5.2"/><rect x="871.2" y="747" width="2" height="9.6"/><rect x="890.1" y="749.5" width="2" height="5.2"/><rect x="927.9" y="749.5" width="2" height="5.2"/><rect x="946.8" y="747" width="2" height="9.6"/><rect x="965.7" y="749.5" width="2" height="5.2"/><rect x="1003.5" y="749.5" width="2" height="5.2"/><rect x="1022.4" y="747" width="2" height="9.6"/><rect x="1041.3" y="749.5" width="2" height="5.2"/><rect x="1079.1" y="749.5" width="2" height="5.2"/><rect x="1098.0" y="747" width="2" height="9.6"/><rect x="1116.9" y="749.5" width="2" height="5.2"/><rect x="1154.7" y="749.5" width="2" height="5.2"/><rect x="1173.6" y="747" width="2" height="9.6"/><rect x="1192.5" y="749.5" width="2" height="5.2"/><rect x="1230.3" y="749.5" width="2" height="5.2"/><rect x="1249.2" y="747" width="2" height="9.6"/><rect x="1268.1" y="749.5" width="2" height="5.2"/><rect x="1305.9" y="749.5" width="2" height="5.2"/><rect x="1324.8" y="747" width="2" height="9.6"/><rect x="1343.7" y="749.5" width="2" height="5.2"/><rect x="1381.5" y="749.5" width="2" height="5.2"/><rect x="1400.4" y="747" width="2" height="9.6"/><rect x="1419.3" y="749.5" width="2" height="5.2"/><rect x="1457.1" y="749.5" width="2" height="5.2"/><rect x="1476.0" y="747" width="2" height="9.6"/><rect x="1494.9" y="749.5" width="2" height="5.2"/><rect x="1532.7" y="749.5" width="2" height="5.2"/><rect x="1551.6" y="747" width="2" height="9.6"/><rect x="1570.5" y="749.5" width="2" height="5.2"/><rect x="1608.3" y="749.5" width="2" height="5.2"/><rect x="1627.2" y="747" width="2" height="9.6"/><rect x="551.1" y="767.6" width="2" height="6.2"/><rect x="645.6" y="767.6" width="2" height="6.2"/><rect x="740.1" y="767.6" width="2" height="6.2"/><rect x="834.6" y="767.6" width="2" height="6.2"/><rect x="929.1" y="767.6" width="2" height="6.2"/><rect x="1023.6" y="767.6" width="2" height="6.2"/><rect x="1118.1" y="767.6" width="2" height="6.2"/><rect x="1212.6" y="767.6" width="2" height="6.2"/><rect x="1307.1" y="767.6" width="2" height="6.2"/><rect x="1401.6" y="767.6" width="2" height="6.2"/><rect x="1496.1" y="767.6" width="2" height="6.2"/><rect x="1590.6" y="767.6" width="2" height="6.2"/><rect x="207.7" y="835.4" width="4.3" height="2"/><rect x="207.7" y="873.2" width="4.3" height="2"/><rect x="205" y="892.1" width="10" height="2"/><rect x="207.7" y="911.0" width="4.3" height="2"/><rect x="207.7" y="948.8" width="4.3" height="2"/><rect x="205" y="967.7" width="10" height="2"/><rect x="207.7" y="986.6" width="4.3" height="2"/><rect x="207.7" y="1024.4" width="4.3" height="2"/><rect x="205" y="1043.3" width="10" height="2"/><rect x="207.7" y="1062.2" width="4.3" height="2"/><rect x="207.7" y="1100.0" width="4.3" height="2"/><rect x="205" y="1118.9" width="10" height="2"/><rect x="207.7" y="1137.8" width="4.3" height="2"/><rect x="207.7" y="1175.6" width="4.3" height="2"/><rect x="205" y="1194.5" width="10" height="2"/><rect x="207.7" y="1213.4" width="4.3" height="2"/><rect x="207.7" y="1251.2" width="4.3" height="2"/><rect x="205" y="1270.1" width="10" height="2"/><rect x="207.7" y="1289.0" width="4.3" height="2"/><rect x="207.7" y="1326.8" width="4.3" height="2"/><rect x="205" y="1345.7" width="10" height="2"/><rect x="207.7" y="1364.6" width="4.3" height="2"/><rect x="207.7" y="1402.4" width="4.3" height="2"/><rect x="205" y="1421.3" width="10" height="2"/><rect x="207.7" y="1440.2" width="4.3" height="2"/></g><text x="305.2" y="758.5" font-size="18" text-anchor="middle" fill="#555" font-family="Liberation Sans">2</text><rect x="381.0" y="745.1" width="2" height="13.4" fill="#555"/><path d="M377.2 749.1 L382.2 745.5" stroke="#555" stroke-width="1.9"/><rect x="532.2" y="745.1" width="2" height="13.4" fill="#555"/><path d="M528.4 749.1 L533.4 745.5" stroke="#555" stroke-width="1.9"/><text x="607.6" y="758.5" font-size="18" text-anchor="middle" fill="#555" font-family="Liberation Sans">2</text><text x="683.2" y="758.5" font-size="18" text-anchor="middle" fill="#555" font-family="Liberation Sans">3</text><text x="758.8" y="758.5" font-size="18" text-anchor="middle" fill="#555" font-family="Liberation Sans">4</text><text x="834.4" y="758.5" font-size="18" text-anchor="middle" fill="#555" font-family="Liberation Sans">5</text><text x="910.0" y="758.5" font-size="18" text-anchor="middle" fill="#555" font-family="Liberation Sans">6</text><text x="985.6" y="758.5" font-size="18" text-anchor="middle" fill="#555" font-family="Liberation Sans">7</text><text x="1061.2" y="758.5" font-size="18" text-anchor="middle" fill="#555" font-family="Liberation Sans">8</text><text x="1136.8" y="758.5" font-size="18" text-anchor="middle" fill="#555" font-family="Liberation Sans">9</text><rect x="1207.6" y="745.1" width="2" height="13.4" fill="#555"/><path d="M1203.8 749.1 L1208.8 745.5" stroke="#555" stroke-width="1.9"/><text x="1217.4" y="758.5" font-size="18" text-anchor="middle" fill="#555" font-family="Liberation Sans">0</text><rect x="1283.2" y="745.1" width="2" height="13.4" fill="#555"/><path d="M1279.4 749.1 L1284.4 745.5" stroke="#555" stroke-width="1.9"/><rect x="1293.2" y="745.1" width="2" height="13.4" fill="#555"/><path d="M1289.4 749.1 L1294.4 745.5" stroke="#555" stroke-width="1.9"/><rect x="1358.8" y="745.1" width="2" height="13.4" fill="#555"/><path d="M1355.0 749.1 L1360.0 745.5" stroke="#555" stroke-width="1.9"/><text x="1368.6" y="758.5" font-size="18" text-anchor="middle" fill="#555" font-family="Liberation Sans">2</text><rect x="1434.4" y="745.1" width="2" height="13.4" fill="#555"/><path d="M1430.6 749.1 L1435.6 745.5" stroke="#555" stroke-width="1.9"/><text x="1444.2" y="758.5" font-size="18" text-anchor="middle" fill="#555" font-family="Liberation Sans">3</text><rect x="1510.0" y="745.1" width="2" height="13.4" fill="#555"/><path d="M1506.2 749.1 L1511.2 745.5" stroke="#555" stroke-width="1.9"/><text x="1519.8" y="758.5" font-size="18" text-anchor="middle" fill="#555" font-family="Liberation Sans">4</text><rect x="1585.6" y="745.1" width="2" height="13.4" fill="#555"/><path d="M1581.8 749.1 L1586.8 745.5" stroke="#555" stroke-width="1.9"/><text x="1595.4" y="758.5" font-size="18" text-anchor="middle" fill="#555" font-family="Liberation Sans">5</text><g transform="translate(217.5 855.3) rotate(-90)"><text x="0.0" y="0.0" font-size="18" text-anchor="middle" fill="#555" font-family="Liberation Sans">2</text></g><g transform="translate(217.5 930.9) rotate(-90)"><rect x="0.2" y="-13.4" width="2" height="13.4" fill="#555"/><path d="M-3.6 -9.4 L1.4 -13.0" stroke="#555" stroke-width="1.9"/></g><g transform="translate(217.5 1082.1) rotate(-90)"><rect x="0.2" y="-13.4" width="2" height="13.4" fill="#555"/><path d="M-3.6 -9.4 L1.4 -13.0" stroke="#555" stroke-width="1.9"/></g><g transform="translate(217.5 1157.7) rotate(-90)"><text x="0.0" y="0.0" font-size="18" text-anchor="middle" fill="#555" font-family="Liberation Sans">2</text></g><g transform="translate(217.5 1233.3) rotate(-90)"><text x="0.0" y="0.0" font-size="18" text-anchor="middle" fill="#555" font-family="Liberation Sans">3</text></g><g transform="translate(217.5 1308.9) rotate(-90)"><text x="0.0" y="0.0" font-size="18" text-anchor="middle" fill="#555" font-family="Liberation Sans">4</text></g><g transform="translate(217.5 1384.5) rotate(-90)"><text x="0.0" y="0.0" font-size="18" text-anchor="middle" fill="#555" font-family="Liberation Sans">5</text></g><g transform="translate(217.5 1460.1) rotate(-90)"><text x="0.0" y="0.0" font-size="18" text-anchor="middle" fill="#555" font-family="Liberation Sans">6</text></g><g fill="#fff" stroke="#555" stroke-width="1.6"><path d="M448.9 733.9 H467.1 V739.5 L458 751.6 L448.9 739.5 Z"/><path d="M458 752.6 L467.1 759.6 V776.1 H448.9 V759.6 Z"/><path d="M448.9 765.8 H467.1" /></g></svg>
<svg style="left:0;top:0" width="2654" height="1688" viewBox="0 0 2654 1688"><path d="M151 495.4 L165.4 502.2 L151 509 L136.5 502.2 Z" fill="#fff" stroke="#fff" stroke-width="1" stroke-linejoin="round"/><path d="M139.8 507.2 L151 512.6 L162.2 507.2 L165.4 508.9 L151 515.6 L136.5 508.9 Z" fill="#d5deea" stroke="#d5deea" stroke-width="0.8" stroke-linejoin="round"/><path d="M139.8 514.3 L151 519.7 L162.2 514.3 L165.4 516 L151 522.6 L136.5 516 Z" fill="#aebdd3" stroke="#aebdd3" stroke-width="0.8" stroke-linejoin="round"/><g fill="none" stroke="#90a9cb" stroke-width="1.9"><path d="M393.8 519.9 H383.1 V496 H401.5 L407 501.2 V506.7"/><path d="M397.8 508 H387 V519.5"/><path d="M401.2 523.4 A6.8 6.8 0 1 1 409 522.4"/></g><path d="M406 518.8 V525 H412.2 Z" fill="#90a9cb"/><rect x="388" y="497" width="11.8" height="5.9" fill="#90a9cb"/><rect x="396" y="497" width="1.8" height="4" fill="#446995"/><g fill="none" stroke="#e3eaf4" stroke-width="1.9"><rect x="467.5" y="495.8" width="17.8" height="6" rx="1.2"/><path d="M467.5 515.6 H461.8 Q461 515.6 461 514.8 V502.5 Q461 501.7 461.8 501.7 H490.5 Q491.3 501.7 491.3 502.5 V514.8 Q491.3 515.6 490.5 515.6 H485.3"/><rect x="467.5" y="509.8" width="17.8" height="10.2" rx="1.2"/></g><rect x="464.3" y="505.3" width="2" height="2" fill="#e3eaf4"/><path d="M541.9 503.1 L546.5 508 C550 504.5 554.5 503.1 559.7 503.1 C565 503.1 569.5 507.5 570.8 513.1 C568.5 509.5 564.5 507.4 559.7 507.4 C556 507.4 553 509.5 551.3 512 L555.9 517.1 H541.9 Z" fill="#dfe6f0"/><path transform="translate(1192 0) scale(-1 1)" d="M541.9 503.1 L546.5 508 C550 504.5 554.5 503.1 559.7 503.1 C565 503.1 569.5 507.5 570.8 513.1 C568.5 509.5 564.5 507.4 559.7 507.4 C556 507.4 553 509.5 551.3 512 L555.9 517.1 H541.9 Z" fill="#a0b3cc"/><circle cx="2150" cy="561.5" r="8.6" fill="none" stroke="#fff" stroke-width="1.8"/><path d="M2156.3 567.8 L2165.6 577.4" stroke="#fff" stroke-width="1.9"/><path d="M421.0 630.5 L426.0 637.5 L431.0 630.5" fill="none" stroke="#444" stroke-width="1.7"/><path d="M514.5 630.5 L519.8 637.5 L525.0 630.5" fill="none" stroke="#444" stroke-width="1.7"/><g fill="none" stroke="#8a8a8a" stroke-width="1.5"><path d="M141.5 636 H139 V619.8 H157 V627"/><rect x="146.5" y="627.5" width="19" height="16.8" rx="1"/></g><g fill="#8a8a8a"><rect x="141.8" y="622.6" width="11.5" height="1.6"/><rect x="141.8" y="627" width="1.6" height="1.6"/><rect x="141.8" y="631" width="1.6" height="1.6"/><rect x="150.2" y="631.2" width="11.8" height="1.6"/><rect x="150.2" y="635.2" width="11.8" height="1.6"/><rect x="150.2" y="639.2" width="11.8" height="1.6"/></g><g fill="none" stroke="#8a8a8a" stroke-width="1.5"><circle cx="202.9" cy="624" r="4.2"/><circle cx="202.9" cy="638" r="4.2"/><path d="M206.5 626 L228.4 639.8 M206.5 636 L228.4 622.2"/></g><g fill="none" stroke="#2e2e2e" stroke-width="1.9"><path d="M143.5 692.3 H139.3 V676.5 H160.6 V683"/><rect x="147.2" y="684.3" width="18" height="16.2" rx="1.2"/></g><rect x="144.4" y="673.2" width="11.5" height="5.4" fill="#2e2e2e"/><g fill="#2e2e2e"><rect x="150.2" y="687.4" width="11.8" height="1.8"/><rect x="150.2" y="691.4" width="11.8" height="1.8"/><rect x="150.2" y="695.4" width="11.8" height="1.8"/></g><g fill="#2e2e2e"><rect x="197.9" y="672.9" width="3" height="1.8"/><rect x="205.8" y="672.9" width="3" height="1.8"/><rect x="213.8" y="672.9" width="3" height="1.8"/><rect x="221.8" y="672.9" width="3" height="1.8"/><rect x="197.9" y="679.5" width="1.8" height="3"/><rect x="197.9" y="687" width="1.8" height="3"/><rect x="197.9" y="694.6" width="1.8" height="3"/><rect x="204.5" y="696.9" width="3" height="1.8"/><rect x="223.8" y="679.5" width="1.8" height="3"/></g><path d="M212.5 680.5 L225.5 693.8 H219.5 L223.3 702.5 L220.2 704 L216.4 695.6 L212.5 699 Z" fill="#fff" stroke="#2e2e2e" stroke-width="1.7" stroke-linejoin="round"/><rect x="252.3" y="607" width="1.5" height="104" fill="#c8c8c8"/><rect x="710.5" y="607" width="1.5" height="104" fill="#c8c8c8"/><rect x="1124.4" y="607" width="1.5" height="104" fill="#c8c8c8"/><g fill="none" stroke="#2e2e2e" stroke-width="1.7"><path d="M548 641 L556.9 621.5 L565.8 641 M551.3 633.6 H562.5"/><path d="M594 641 L601 625.2 L607.8 641 M596.5 634.4 H605.5"/><path d="M634.2 641 L643 621.5 L651.6 641 M637.5 633.6 H648.5"/></g><path d="M563 622.6 L567 618.6 L570.9 622.6 Z M607.1 621.2 H615 L611.1 625.8 Z" fill="#2e2e2e"/><text x="652.8" y="641" font-size="19" fill="#2e2e2e" font-family="Liberation Sans">a</text><path d="M672.9 629.4 L678.1 634.6 L683.3 629.4" fill="none" stroke="#444" stroke-width="1.7"/><text x="284.5" y="697" font-size="29" font-weight="bold" fill="#2e2e2e" font-family="Liberation Sans">B</text><g fill="none" stroke="#2e2e2e" stroke-width="1.9"><path d="M337.9 677.6 H348 M334 696 H344 M342.8 678 L338.8 695.5"/><path d="M382.8 676.6 V688 Q382.8 695.3 390.2 695.3 Q397.5 695.3 397.5 688 V676.6"/><path d="M380 697.8 H400" stroke-width="2"/><path d="M425.9 687.7 H450"/></g><text x="431" y="697" font-size="27" fill="#2e2e2e" font-family="Liberation Sans" transform="translate(437.5 0) scale(0.75 1) translate(-437.5 0)">S</text><g fill="none" stroke="#2e2e2e" stroke-width="1.7"><path d="M474.5 697 L482.9 676.8 L491.3 697 M477.6 688.8 H488.2"/><path d="M522.6 697 L531.2 676.8 L539.7 697 M525.8 688.8 H536.5"/></g><text x="491.2" y="680.8" font-size="10.5" font-weight="bold" fill="#2e2e2e" font-family="Liberation Sans">2</text><text x="541" y="699" font-size="10.5" font-weight="bold" fill="#2e2e2e" font-family="Liberation Sans">2</text><path d="M572.5 690.2 L588.5 674.2 Q590.3 672.4 592.1 674.2 L595.3 677.4 Q597.1 679.2 595.3 681 L579.3 697 Q577.5 698.8 575.7 697 L572.5 693.8 Q570.7 692 572.5 690.2 Z M586.2 676.5 L593 683.3" fill="none" stroke="#2e2e2e" stroke-width="1.8"/><path d="M568.7 694.8 L573 690.5 L577 694.5 L575.7 695 Z" fill="#2e2e2e"/><rect x="568" y="698.3" width="28" height="6.5" fill="#ffff00"/><path d="M607.2 684.8 L612.5 689.9 L617.8 684.8" fill="none" stroke="#444" stroke-width="1.7"/><path d="M638.2 697 L648.1 676.9 L657.8 697 M641.5 688.8 H654.6" fill="none" stroke="#2e2e2e" stroke-width="1.8"/><rect x="634.1" y="699.1" width="28" height="5.7" fill="#000"/><path d="M673.0 684.8 L678.2 689.9 L683.5 684.8" fill="none" stroke="#444" stroke-width="1.7"/><g fill="#2e2e2e"><circle cx="742.9" cy="622" r="3"/><circle cx="742.9" cy="632" r="3"/><circle cx="742.9" cy="642.1" r="3"/><rect x="748.6" y="621" width="15.3" height="2"/><rect x="748.6" y="631" width="15.3" height="2"/><rect x="748.6" y="641.1" width="15.3" height="2"/><rect x="810.2" y="621" width="15.8" height="2"/><rect x="810.2" y="631" width="15.8" height="2"/><rect x="810.2" y="641.1" width="15.8" height="2"/><rect x="870.4" y="621" width="19.6" height="2"/><circle cx="869" cy="632" r="1.9"/><rect x="876" y="631" width="14" height="2"/><rect x="874.2" y="637.5" width="1.9" height="2"/><rect x="874.2" y="641" width="1.9" height="3"/><rect x="880.4" y="641.1" width="9.6" height="2"/></g><text x="801.5" y="625.4" font-size="10.5" font-weight="bold" fill="#2e2e2e" font-family="Liberation Sans">1</text><text x="801.5" y="635.4" font-size="10.5" font-weight="bold" fill="#2e2e2e" font-family="Liberation Sans">2</text><text x="801.5" y="645.4" font-size="10.5" font-weight="bold" fill="#2e2e2e" font-family="Liberation Sans">3</text><text x="861.8" y="625.4" font-size="10.5" font-weight="bold" fill="#2e2e2e" font-family="Liberation Sans">1</text><path d="M776.8 629.4 L782.0 635.0 L787.3 629.4" fill="none" stroke="#444" stroke-width="1.7"/><path d="M838.4 629.4 L843.9 635.0 L849.4 629.4" fill="none" stroke="#444" stroke-width="1.7"/><path d="M900.5 629.4 L906.0 635.0 L911.5 629.4" fill="none" stroke="#444" stroke-width="1.7"/><g fill="#2e2e2e"><rect x="925.8" y="621" width="24.4" height="2"/><rect x="938.2" y="625" width="12" height="2"/><rect x="938.2" y="629" width="12" height="2"/><rect x="938.2" y="633" width="12" height="2"/><rect x="938.2" y="637" width="12" height="2"/><rect x="925.8" y="641" width="24.4" height="2"/><rect x="988.2" y="621" width="23.8" height="2"/><rect x="1000.2" y="625" width="11.8" height="2"/><rect x="1000.2" y="629" width="11.8" height="2"/><rect x="1000.2" y="633" width="11.8" height="2"/><rect x="1000.2" y="637" width="11.8" height="2"/><rect x="988.2" y="641" width="23.8" height="2"/></g><g fill="none" stroke="#2e2e2e" stroke-width="1.9"><path d="M926.5 632 H935.5 M931.5 627 L926.5 632 L931.5 637"/><path d="M988.2 632.1 H997.5 M992 627.9 L997 632.1 L992 636.4"/></g><g fill="none" stroke="#2e2e2e" stroke-width="1.9"><path d="M1054.9 620 V642.3 M1049.8 625 L1054.9 619.8 L1060 625 M1049.8 637.3 L1054.9 642.5 L1060 637.3"/></g><g fill="#2e2e2e"><rect x="1062.5" y="621" width="13.6" height="2"/><rect x="1062.5" y="627" width="13.6" height="2"/><rect x="1062.5" y="633" width="13.6" height="2"/><rect x="1062.5" y="639" width="13.6" height="2"/></g><path d="M1086.6 629.3 L1092.0 634.8 L1097.4 629.3" fill="none" stroke="#444" stroke-width="1.7"/><rect x="732.1" y="667.1" width="39.7" height="39.6" rx="2" fill="#7b848c"/><rect x="740.0" y="677.0" width="23.9" height="2" fill="#fff"/><rect x="740.0" y="681.0" width="14.0" height="2" fill="#fff"/><rect x="740.0" y="685.0" width="20.0" height="2" fill="#fff"/><rect x="740.0" y="689.0" width="14.0" height="2" fill="#fff"/><rect x="740.0" y="693.0" width="14.0" height="2" fill="#fff"/><rect x="740.0" y="697.0" width="23.9" height="2" fill="#fff"/><rect x="802.1" y="677.0" width="23.9" height="2" fill="#2e2e2e"/><rect x="808.1" y="681.0" width="11.9" height="2" fill="#2e2e2e"/><rect x="804.0" y="685.0" width="20.0" height="2" fill="#2e2e2e"/><rect x="808.1" y="689.0" width="11.9" height="2" fill="#2e2e2e"/><rect x="808.1" y="693.0" width="11.9" height="2" fill="#2e2e2e"/><rect x="802.1" y="697.0" width="23.9" height="2" fill="#2e2e2e"/><rect x="864.2" y="677.0" width="23.8" height="2" fill="#2e2e2e"/><rect x="874.2" y="681.0" width="13.8" height="2" fill="#2e2e2e"/><rect x="868.0" y="685.0" width="20.0" height="2" fill="#2e2e2e"/><rect x="874.2" y="689.0" width="13.8" height="2" fill="#2e2e2e"/><rect x="874.2" y="693.0" width="13.8" height="2" fill="#2e2e2e"/><rect x="864.2" y="697.0" width="23.8" height="2" fill="#2e2e2e"/><rect x="925.8" y="677.0" width="24.4" height="2" fill="#2e2e2e"/><rect x="925.8" y="681.0" width="24.4" height="2" fill="#2e2e2e"/><rect x="925.8" y="685.0" width="24.4" height="2" fill="#2e2e2e"/><rect x="925.8" y="689.0" width="24.4" height="2" fill="#2e2e2e"/><rect x="925.8" y="693.0" width="24.4" height="2" fill="#2e2e2e"/><rect x="925.8" y="697.0" width="24.4" height="2" fill="#2e2e2e"/><path d="M990.2 681.8 Q990.2 674.9 997.5 674.9 H1008 V677 H1006 V699 H1004 V677 H1000 V699 H998 V688.7 Q990.2 688.7 990.2 681.8 Z" fill="#2e2e2e"/><path d="M1024.6 684.8 L1030.1 690.6 L1035.6 684.8" fill="none" stroke="#444" stroke-width="1.7"/><path d="M1061.1 676.4 L1071.5 686.8 Q1072.6 687.9 1071.5 689 L1062.2 698.3 Q1061.1 699.4 1060 698.3 L1049.6 687.9 Q1048.5 686.8 1049.6 685.7 L1058.9 676.4 Q1060 675.3 1061.1 676.4 Z M1054 673 L1063.7 682.7" fill="none" stroke="#2e2e2e" stroke-width="1.8"/><path d="M1072.7 689.8 Q1075.2 693 1075.2 694.2 Q1075.2 696.5 1072.7 696.5 Q1070.2 696.5 1070.2 694.2 Q1070.2 693 1072.7 689.8 Z" fill="#2e2e2e"/><rect x="1048" y="699" width="28.1" height="5.7" fill="#fff"/><path d="M1086.6 684.8 L1092.0 690.6 L1097.4 684.8" fill="none" stroke="#444" stroke-width="1.7"/><g transform="translate(1165.1 631.5) rotate(-45)" fill="none" stroke="#2e2e2e" stroke-width="1.8"><rect x="-12" y="-7.2" width="24" height="14.4" rx="3"/><path d="M4.5 -7.2 V7.2"/></g><path d="M1163.5 642.2 H1176.5" stroke="#2e2e2e" stroke-width="1.8"/><rect x="1215.3" y="618" width="13.2" height="13" fill="#cfcfcf"/><rect x="1228.5" y="618" width="12.5" height="13" fill="#f2f2f2"/><rect x="1215.3" y="631" width="13.2" height="12.5" fill="#a8a8a8"/><rect x="1228.5" y="631" width="12.5" height="12.5" fill="#7f7f7f"/><rect x="1215.2" y="617.9" width="25.9" height="25.7" fill="none" stroke="#2e2e2e" stroke-width="2"/><path d="M1252.8 629.3 L1258.2 635.0 L1263.6 629.3" fill="none" stroke="#444" stroke-width="1.7"/><rect x="1159.2" y="673.6" width="18.2" height="8.6" rx="1" fill="none" stroke="#2e2e2e" stroke-width="1.8"/><path d="M1159.2 677.8 H1155.8 V686.3 H1167.1 V689.5" fill="none" stroke="#2e2e2e" stroke-width="1.8"/><rect x="1164" y="689.3" width="6.2" height="11.6" fill="#2e2e2e"/><rect x="1213.4" y="678.3" width="28" height="19.8" rx="1" fill="none" stroke="#2e2e2e" stroke-width="2"/><path d="M1213.8 678.8 L1227.4 691.7 L1241 678.8 M1213.8 697.5 L1222.5 688.5 M1241 697.5 L1232.3 688.5" fill="none" stroke="#2e2e2e" stroke-width="1.8"/><path d="M1252.8 684.8 L1258.2 690.6 L1263.6 684.8" fill="none" stroke="#444" stroke-width="1.7"/><path d="M1963.0 655.0 L1974.5 666.0 L1986.0 655.0" fill="none" stroke="#444" stroke-width="1.9"/><g fill="none" stroke="#2e2e2e" stroke-width="1.9"><circle cx="147.8" cy="783.7" r="9.6"/><path d="M154.6 790.5 L163.9 799.8"/><path d="M136.4 850.3 H165.7 V871.2 H150.4 L145.9 876 L141.3 871.2 H136.4 Z" stroke-linejoin="miter"/></g><g fill="#2e2e2e"><rect x="141.3" y="855" width="19.6" height="1.8"/><rect x="141.3" y="859" width="19.6" height="1.8"/><rect x="141.3" y="863" width="13.7" height="1.8"/><rect x="139.1" y="928.7" width="17.9" height="1.9"/><rect x="143" y="934.8" width="17.9" height="1.9"/><rect x="147.2" y="940.8" width="17.6" height="1.9"/><rect x="139.1" y="946.9" width="17.9" height="1.9"/></g><path d="M1650 744.8 L1656.5 737.8 L1663 744.8 Z M1650 1444.5 H1663 L1656.5 1452 Z M203 1476.5 L210 1470 V1483 Z M1626 1470 L1633 1476.5 L1626 1483 Z" fill="#a8a8a8"/><g fill="#c0c0c0"><rect x="1652" y="845" width="10" height="1.5"/><rect x="1652" y="849" width="10" height="1.5"/><rect x="1652" y="853" width="10" height="1.5"/><rect x="1652" y="857" width="10" height="1.5"/><rect x="1652" y="861" width="10" height="1.5"/><rect x="1652" y="865" width="10" height="1.5"/><rect x="1652" y="869" width="10" height="1.5"/><rect x="799" y="1471" width="1.5" height="10"/><rect x="803" y="1471" width="1.5" height="10"/><rect x="807" y="1471" width="1.5" height="10"/><rect x="811" y="1471" width="1.5" height="10"/><rect x="815" y="1471" width="1.5" height="10"/><rect x="819" y="1471" width="1.5" height="10"/><rect x="823" y="1471" width="1.5" height="10"/></g><path d="M1852.0 792.0 L1857.5 798.0 L1863.0 792.0" fill="none" stroke="#444" stroke-width="1.6"/><path d="M1852.0 1213.0 L1857.5 1219.0 L1863.0 1213.0" fill="none" stroke="#444" stroke-width="1.6"/><path d="M2043.5 785.5 L2049.0 779.5 L2054.5 785.5 M2043.5 800.5 L2049.0 806.5 L2054.5 800.5" fill="none" stroke="#444" stroke-width="1.6"/><path d="M1849.0 905.5 L1854.5 899.5 L1860.0 905.5 M1849.0 920.5 L1854.5 926.5 L1860.0 920.5" fill="none" stroke="#444" stroke-width="1.6"/><path d="M2043.5 905.5 L2049.0 899.5 L2054.5 905.5 M2043.5 920.5 L2049.0 926.5 L2054.5 920.5" fill="none" stroke="#444" stroke-width="1.6"/><path d="M1849.0 1119.5 L1854.5 1113.5 L1860.0 1119.5 M1849.0 1134.5 L1854.5 1140.5 L1860.0 1134.5" fill="none" stroke="#444" stroke-width="1.6"/><path d="M2043.5 1119.5 L2049.0 1113.5 L2054.5 1119.5 M2043.5 1134.5 L2049.0 1140.5 L2054.5 1134.5" fill="none" stroke="#444" stroke-width="1.6"/><path d="M2043.5 1209.5 L2049.0 1203.5 L2054.5 1209.5 M2043.5 1224.5 L2049.0 1230.5 L2054.5 1224.5" fill="none" stroke="#444" stroke-width="1.6"/><path d="M1710.5 1311 L1769 1278" stroke="#e01010" stroke-width="1.8"/><path d="M1775.0 1292.5 L1780.0 1298.5 L1785.0 1292.5" fill="none" stroke="#444" stroke-width="1.6"/><path d="M2142.3 781.6 Q2142.3 774.5 2150 774.5 H2161 V776.6 H2159 V799 H2157 V776.6 H2153 V799 H2151 V788.7 Q2142.3 788.7 2142.3 781.6 Z" fill="#fff"/><g fill="none" stroke="#a0a0a0" stroke-width="1.8"><rect x="2138" y="853.6" width="29.8" height="20.1" rx="1.5"/><path d="M2138 860.5 H2167.8 M2138 867 H2167.8 M2147.9 858 V873.7 M2157.9 858 V873.7"/><rect x="2140.3" y="925.6" width="25.6" height="25.9" rx="1"/><circle cx="2145.6" cy="931.5" r="2"/><path d="M2140.5 944 L2147 937.5 L2152 941.5 L2158.5 936 L2165.8 942"/><rect x="2142.2" y="999.9" width="21.7" height="29.2" rx="1.2"/><path d="M2156.4 1086 V1078.3 H2140.3 V1094 H2147.6"/><circle cx="2156.8" cy="1095" r="8.1"/><rect x="2140.7" y="1172.5" width="5" height="6.6"/><rect x="2150.3" y="1164.5" width="5" height="14.6"/><rect x="2160.6" y="1154.5" width="5" height="24.6"/><path d="M2142.3 1252.4 Q2152.6 1242.5 2163 1252.4"/><rect x="2138.4" y="1310.2" width="27.5" height="19.2" rx="1"/><path d="M2138.8 1310.8 L2152.2 1322.5 L2165.5 1310.8 M2138.8 1329.5 L2147 1320 M2165.5 1329.5 L2157.4 1320"/></g><g fill="#a0a0a0"><rect x="2138" y="853.6" width="29.8" height="5"/><rect x="2145" y="1003.3" width="16" height="3"/><rect x="2145" y="1023" width="16" height="3"/></g><text x="2141" y="1246.5" font-size="25" fill="#a0a0a0" font-family="Liberation Sans" transform="translate(2141 1246.5) scale(0.85 1) translate(-2141 -1246.5)">Ta</text><g fill="#2e2e2e"><rect x="345.5" y="1502" width="23.5" height="1.8"/><rect x="345.5" y="1506.3" width="23.5" height="1.8"/><rect x="345.5" y="1510.6" width="15.5" height="1.8"/></g><text x="345.5" y="1529.8" font-size="13.5" font-weight="bold" fill="#2e2e2e" font-family="Liberation Sans" letter-spacing="1.2">123</text><path d="M1519.5 1514.0 L1525.2 1520.5 L1531.0 1514.0" fill="none" stroke="#444" stroke-width="1.6"/><g fill="none" stroke="#2e2e2e" stroke-width="1.7"><circle cx="1564.1" cy="1516.8" r="14"/><ellipse cx="1564.1" cy="1516.8" rx="7.8" ry="14"/><path d="M1564.1 1502.8 V1530.8 M1551.2 1511 H1577 M1551.2 1522.9 H1577"/></g><g fill="none" stroke="#2e2e2e" stroke-width="1.8"><path d="M1663.5 1506 V1503 Q1663.5 1501.5 1662 1501.5 H1644 Q1642.5 1501.5 1642.5 1503 V1529.3 Q1642.5 1530.8 1644 1530.8 H1662 Q1663.5 1530.8 1663.5 1529.3 V1524"/><path d="M1645.3 1509 H1659 M1645.3 1513 H1655 M1645.3 1516.9 H1650.8 M1645.3 1520.9 H1649"/><path d="M1656.3 1521.5 L1667.8 1510 L1670 1512.2 L1658.5 1523.7 Z"/></g><path d="M1651.6 1524.8 L1655.5 1520.5 L1658.8 1523.8 Z" fill="#2e2e2e"/><path d="M1679.0 1514.0 L1685.0 1520.5 L1691.0 1514.0" fill="none" stroke="#444" stroke-width="1.6"/><g fill="none" stroke="#2e2e2e" stroke-width="1.8"><rect x="1745" y="1503" width="24.5" height="28.5" rx="1"/><path d="M1757.3 1506 V1528.5 M1748 1517.3 H1766.5 M1754 1509 L1757.3 1505.8 L1760.6 1509 M1754 1525.5 L1757.3 1528.7 L1760.6 1525.5 M1751 1514 L1747.8 1517.3 L1751 1520.5 M1763.5 1514 L1766.7 1517.3 L1763.5 1520.5"/><path d="M1802.5 1505.5 V1529 M1833.5 1505.5 V1529 M1806 1517.3 H1830 M1810 1513 L1805.8 1517.3 L1810 1521.5 M1826 1513 L1830.2 1517.3 L1826 1521.5"/><path d="M1870 1516.8 H1890"/><path d="M2093 1506 V1528 M2082 1517 H2104"/></g><g transform="translate(2472 636) scale(0.8) translate(-1288.2 -280)"><g fill="#3f3f3f"><path d="M1288.2 313.7 V304.3 L1306.4 286 L1315 294.6 L1296.7 313.7 Z"/><path d="M1308 284.3 L1312.3 280 Q1313.3 279.2 1314.3 280 L1321.3 287 Q1322.1 288 1321.3 289 L1316.9 293.3 Z"/></g><path d="M1290.5 305.5 L1294.8 309.8 L1292.9 311.5 L1291.4 310.2 L1289.8 311.4 Z" fill="#e5e5e5"/></g></svg>
</div>
<div id="wb"></div>
</body></html>
